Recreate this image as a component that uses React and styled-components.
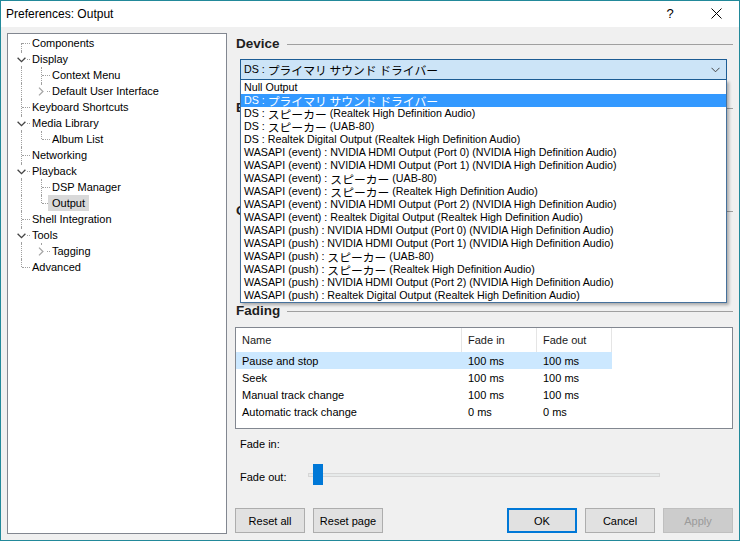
import React from 'react'
import styled, { createGlobalStyle } from 'styled-components'

const GlobalStyle = createGlobalStyle`
  * { box-sizing: border-box; }
  html, body {
    margin: 0;
    padding: 0;
    background: #f0f0f0;
  }
  body {
    font-family: 'Liberation Sans', 'Noto Sans CJK JP', sans-serif;
    font-size: 11px;
    color: #000;
  }
`

const treeRows = [
  { label: 'Components', cells: ['first'] },
  { label: 'Display', cells: ['tee'], expander: 'open' },
  { label: 'Context Menu', cells: ['line', 'tee'] },
  { label: 'Default User Interface', cells: ['line', 'elbow'], expander: 'closed' },
  { label: 'Keyboard Shortcuts', cells: ['tee'] },
  { label: 'Media Library', cells: ['tee'], expander: 'open' },
  { label: 'Album List', cells: ['line', 'elbow'] },
  { label: 'Networking', cells: ['tee'] },
  { label: 'Playback', cells: ['tee'], expander: 'open' },
  { label: 'DSP Manager', cells: ['line', 'tee'] },
  { label: 'Output', cells: ['line', 'elbow'], selected: true },
  { label: 'Shell Integration', cells: ['tee'] },
  { label: 'Tools', cells: ['tee'], expander: 'open' },
  { label: 'Tagging', cells: ['line', 'elbow'], expander: 'closed' },
  { label: 'Advanced', cells: ['elbow'] }
]

const devices = [
  'Null Output',
  'DS : プライマリ サウンド ドライバー',
  'DS : スピーカー (Realtek High Definition Audio)',
  'DS : スピーカー (UAB-80)',
  'DS : Realtek Digital Output (Realtek High Definition Audio)',
  'WASAPI (event) : NVIDIA HDMI Output (Port 0) (NVIDIA High Definition Audio)',
  'WASAPI (event) : NVIDIA HDMI Output (Port 1) (NVIDIA High Definition Audio)',
  'WASAPI (event) : スピーカー (UAB-80)',
  'WASAPI (event) : スピーカー (Realtek High Definition Audio)',
  'WASAPI (event) : NVIDIA HDMI Output (Port 2) (NVIDIA High Definition Audio)',
  'WASAPI (event) : Realtek Digital Output (Realtek High Definition Audio)',
  'WASAPI (push) : NVIDIA HDMI Output (Port 0) (NVIDIA High Definition Audio)',
  'WASAPI (push) : NVIDIA HDMI Output (Port 1) (NVIDIA High Definition Audio)',
  'WASAPI (push) : スピーカー (UAB-80)',
  'WASAPI (push) : スピーカー (Realtek High Definition Audio)',
  'WASAPI (push) : NVIDIA HDMI Output (Port 2) (NVIDIA High Definition Audio)',
  'WASAPI (push) : Realtek Digital Output (Realtek High Definition Audio)'
]

const fades = [
  { name: 'Pause and stop', fadeIn: '100 ms', fadeOut: '100 ms', selected: true },
  { name: 'Seek', fadeIn: '100 ms', fadeOut: '100 ms' },
  { name: 'Manual track change', fadeIn: '100 ms', fadeOut: '100 ms' },
  { name: 'Automatic track change', fadeIn: '0 ms', fadeOut: '0 ms' }
]

// japanese runs get the wider gothic size the dialog uses
const kana = /([\u3000-\u30ff\u4e00-\u9fff]+(?: [\u3000-\u30ff\u4e00-\u9fff]+)*)/

function DeviceName ({ text }) {
  return text.split(kana).map((part, i) =>
    i % 2 === 1 ? <Jp key={i}>{part}</Jp> : part
  )
}

function Chevron ({ dir }) {
  if (dir === 'open') {
    return (
      <svg width='9' height='6' viewBox='0 0 9 6'>
        <path d='M0.6 0.8 L4.5 4.7 L8.4 0.8' fill='none' stroke='#444' strokeWidth='1.3' />
      </svg>
    )
  }
  return (
    <svg width='6' height='9' viewBox='0 0 6 9'>
      <path d='M1 0.6 L4.9 4.5 L1 8.4' fill='none' stroke='#a6a6a6' strokeWidth='1.3' />
    </svg>
  )
}

function App () {
  return (
    <>
      <GlobalStyle />
      <Window>
        <TitleBar>
          <Title>Preferences: Output</Title>
          <CaptionButton>?</CaptionButton>
          <CaptionButton>
            <svg width='11' height='11' viewBox='0 0 11 11'>
              <path d='M0.5 0.5 L10.5 10.5 M10.5 0.5 L0.5 10.5' stroke='#000' strokeWidth='1' />
            </svg>
          </CaptionButton>
        </TitleBar>

        <Body>
          <Tree>
            {treeRows.map((row) => (
              <TreeRow key={row.label}>
                {row.cells.map((kind, i) => (
                  <Cell key={i} $kind={kind}>
                    {row.expander && i === row.cells.length - 1 && (
                      <Expander>
                        <Chevron dir={row.expander} />
                      </Expander>
                    )}
                  </Cell>
                ))}
                <TreeLabel $selected={row.selected}>{row.label}</TreeLabel>
              </TreeRow>
            ))}
          </Tree>

          <Panel>
            <SectionHeader>
              <span>Device</span>
              <Rule />
            </SectionHeader>

            <Combo>
              <ComboField $open>
                <span><DeviceName text={devices[1]} /></span>
                <svg width='9' height='6' viewBox='0 0 9 6'>
                  <path d='M0.5 0.8 L4.5 4.8 L8.5 0.8' fill='none' stroke='#444' strokeWidth='1' />
                </svg>
              </ComboField>
              <DropList>
                {devices.map((d, i) => (
                  <DropItem key={d} $selected={i === 1}>
                    <DeviceName text={d} />
                  </DropItem>
                ))}
              </DropList>
            </Combo>

            <SectionHeader $top={19}>
              <span>Buffer length</span>
              <Rule />
            </SectionHeader>
            <HiddenBlock $height={86} />

            <SectionHeader>
              <span>Output format</span>
              <Rule />
            </SectionHeader>
            <HiddenBlock $height={83} />

            <SectionHeader>
              <span>Fading</span>
              <Rule />
            </SectionHeader>

            <ListView>
              <ListHeader>
                <HeaderCell>Name</HeaderCell>
                <HeaderCell>Fade in</HeaderCell>
                <HeaderCell>Fade out</HeaderCell>
              </ListHeader>
              {fades.map((f) => (
                <ListRow key={f.name} $selected={f.selected}>
                  <ListCell>{f.name}</ListCell>
                  <ListCell>{f.fadeIn}</ListCell>
                  <ListCell>{f.fadeOut}</ListCell>
                </ListRow>
              ))}
            </ListView>

            <FadeRow $top={3}>
              <FadeLabel>Fade in:</FadeLabel>
            </FadeRow>
            <FadeRow $top={11}>
              <FadeLabel>Fade out:</FadeLabel>
              <Track>
                <Thumb $left={4} />
              </Track>
            </FadeRow>

            <ButtonBar>
              <ButtonGroup>
                <Button>Reset all</Button>
                <Button>Reset page</Button>
              </ButtonGroup>
              <ButtonGroup>
                <Button $primary>OK</Button>
                <Button>Cancel</Button>
                <Button disabled>Apply</Button>
              </ButtonGroup>
            </ButtonBar>
          </Panel>
        </Body>
      </Window>
    </>
  )
}

const Window = styled.div`
  width: 740px;
  height: 541px;
  border: 1px solid #22899a;
  background: #f0f0f0;
  display: flex;
  flex-direction: column;
  overflow: hidden;
`

const TitleBar = styled.div`
  height: 26px;
  flex: none;
  background: #fff;
  display: flex;
  align-items: center;
`

const Title = styled.div`
  flex: 1;
  padding: 0 0 1px 5px;
  font-size: 12px;
`

const CaptionButton = styled.div`
  width: 46px;
  height: 26px;
  display: flex;
  align-items: center;
  justify-content: center;
  font-size: 13px;
  padding-bottom: 1px;
`

const Body = styled.div`
  flex: 1;
  display: flex;
  gap: 8px;
  padding: 6px;
  min-height: 0;
`

const Tree = styled.div`
  width: 220px;
  flex: none;
  background: #fff;
  border: 1px solid #828790;
  padding-top: 1px;
`

const TreeRow = styled.div`
  display: flex;
  align-items: center;
  height: 16px;
`

const Cell = styled.span`
  position: relative;
  flex: none;
  width: 20px;
  height: 16px;

  &::before {
    content: '';
    position: absolute;
    left: 13px;
    top: ${(p) => (p.$kind === 'first' ? '8px' : '0')};
    height: ${(p) => (p.$kind === 'line' || p.$kind === 'tee' ? '16px' : '8px')};
    border-left: 1px dotted #a0a0a0;
  }

  &::after {
    content: '';
    display: ${(p) => (p.$kind === 'line' ? 'none' : 'block')};
    position: absolute;
    left: 14px;
    top: 8px;
    width: 8px;
    border-top: 1px dotted #a0a0a0;
  }
`

const Expander = styled.span`
  position: absolute;
  z-index: 1;
  left: 7px;
  top: 3px;
  width: 12px;
  height: 11px;
  background: #fff;
  display: flex;
  align-items: center;
  justify-content: center;
`

const TreeLabel = styled.span`
  position: relative;
  z-index: 1;
  padding: 0 4px 0 4px;
  line-height: 16px;
  white-space: nowrap;
  background: ${(p) => (p.$selected ? '#d9d9d9' : 'transparent')};
`

const Panel = styled.div`
  flex: 1;
  min-width: 0;
  display: flex;
  flex-direction: column;
  padding-top: 2px;
`

const SectionHeader = styled.div`
  display: flex;
  align-items: center;
  gap: 7px;
  height: 17px;
  flex: none;
  margin-top: ${(p) => (p.$top || 0)}px;
  padding-left: 1px;
  font-size: 13.5px;
  font-weight: bold;
  color: #1e1e1e;
`

const Rule = styled.div`
  flex: 1;
  height: 1px;
  margin-top: 1px;
  background: #a0a0a0;
`

const Combo = styled.div`
  position: relative;
  z-index: 5;
  margin: 7px 6px 0 5px;
`

const ComboField = styled.div`
  height: 21px;
  display: flex;
  align-items: center;
  justify-content: space-between;
  padding: 0 6px 0 3px;
  border: 1px solid ${(p) => (p.$open ? '#1d5d95' : '#adadad')};
  background: ${(p) => (p.$open ? '#cce4f7' : '#e1e1e1')};
  font-size: 10.7px;
  line-height: 13px;
  white-space: nowrap;
`

const Jp = styled.span`
  display: inline-block;
  vertical-align: top;
  height: 13px;
  line-height: 13px;
  font-family: 'Noto Sans CJK JP', sans-serif;
  font-size: 11.8px;
`

const DropList = styled.div`
  position: absolute;
  left: 0;
  right: 0;
  top: 21px;
  background: #fff;
  border: 1px solid #46719c;
  border-top: none;
  padding: 1px 0 0;
  box-shadow: 2px 2px 3px rgba(0, 0, 0, 0.3);
`

const DropItem = styled.div`
  height: 13px;
  line-height: 13px;
  padding-left: 3px;
  font-size: 10.7px;
  white-space: nowrap;
  background: ${(p) => (p.$selected ? '#3399ff' : 'transparent')};
  color: ${(p) => (p.$selected ? '#fff' : '#000')};
`

const HiddenBlock = styled.div`
  height: ${(p) => p.$height}px;
  flex: none;
`

const ListView = styled.div`
  height: 102px;
  flex: none;
  margin-top: 8px;
  background: #fff;
  border: 1px solid #828790;
`

const columns = '226px 75px 75px'

const ListHeader = styled.div`
  display: grid;
  grid-template-columns: ${columns};
  height: 24px;
`

const HeaderCell = styled.div`
  display: flex;
  align-items: center;
  padding-left: 6px;
  border-right: 1px solid #e5e5e5;
  color: #1a1a1a;
`

const ListRow = styled.div`
  display: grid;
  grid-template-columns: ${columns};
  width: 376px;
  height: 17px;
  background: ${(p) => (p.$selected ? '#cce8ff' : 'transparent')};
`

const ListCell = styled.div`
  display: flex;
  align-items: center;
  padding-left: 6px;
  white-space: nowrap;
`

const FadeRow = styled.div`
  display: flex;
  align-items: center;
  height: 22px;
  flex: none;
  margin: ${(p) => (p.$top || 0)}px 0 0 5px;
`

const FadeLabel = styled.div`
  width: 68px;
  flex: none;
  padding-top: 2px;
`

const Track = styled.div`
  position: relative;
  width: 352px;
  height: 4px;
  margin-top: -3px;
  background: #e7eaea;
  border: 1px solid #d6d6d6;
`

const Thumb = styled.div`
  position: absolute;
  left: ${(p) => p.$left}px;
  top: -10px;
  width: 10px;
  height: 21px;
  background: #0078d7;
`

const ButtonBar = styled.div`
  display: flex;
  justify-content: space-between;
  margin-top: 21px;
`

const ButtonGroup = styled.div`
  display: flex;
  gap: 8px;
`

const Button = styled.button`
  width: 70px;
  height: 25px;
  padding: 0;
  font-family: inherit;
  font-size: 11px;
  color: #000;
  background: #e1e1e1;
  border: 1px solid #adadad;
  box-shadow: ${(p) => (p.$primary ? 'inset 0 0 0 1px #0078d7' : 'none')};
  border-color: ${(p) => (p.$primary ? '#0078d7' : '#adadad')};

  &:disabled {
    background: #cccccc;
    border-color: #bfbfbf;
    color: #9a9a9a;
  }
`

export default App
